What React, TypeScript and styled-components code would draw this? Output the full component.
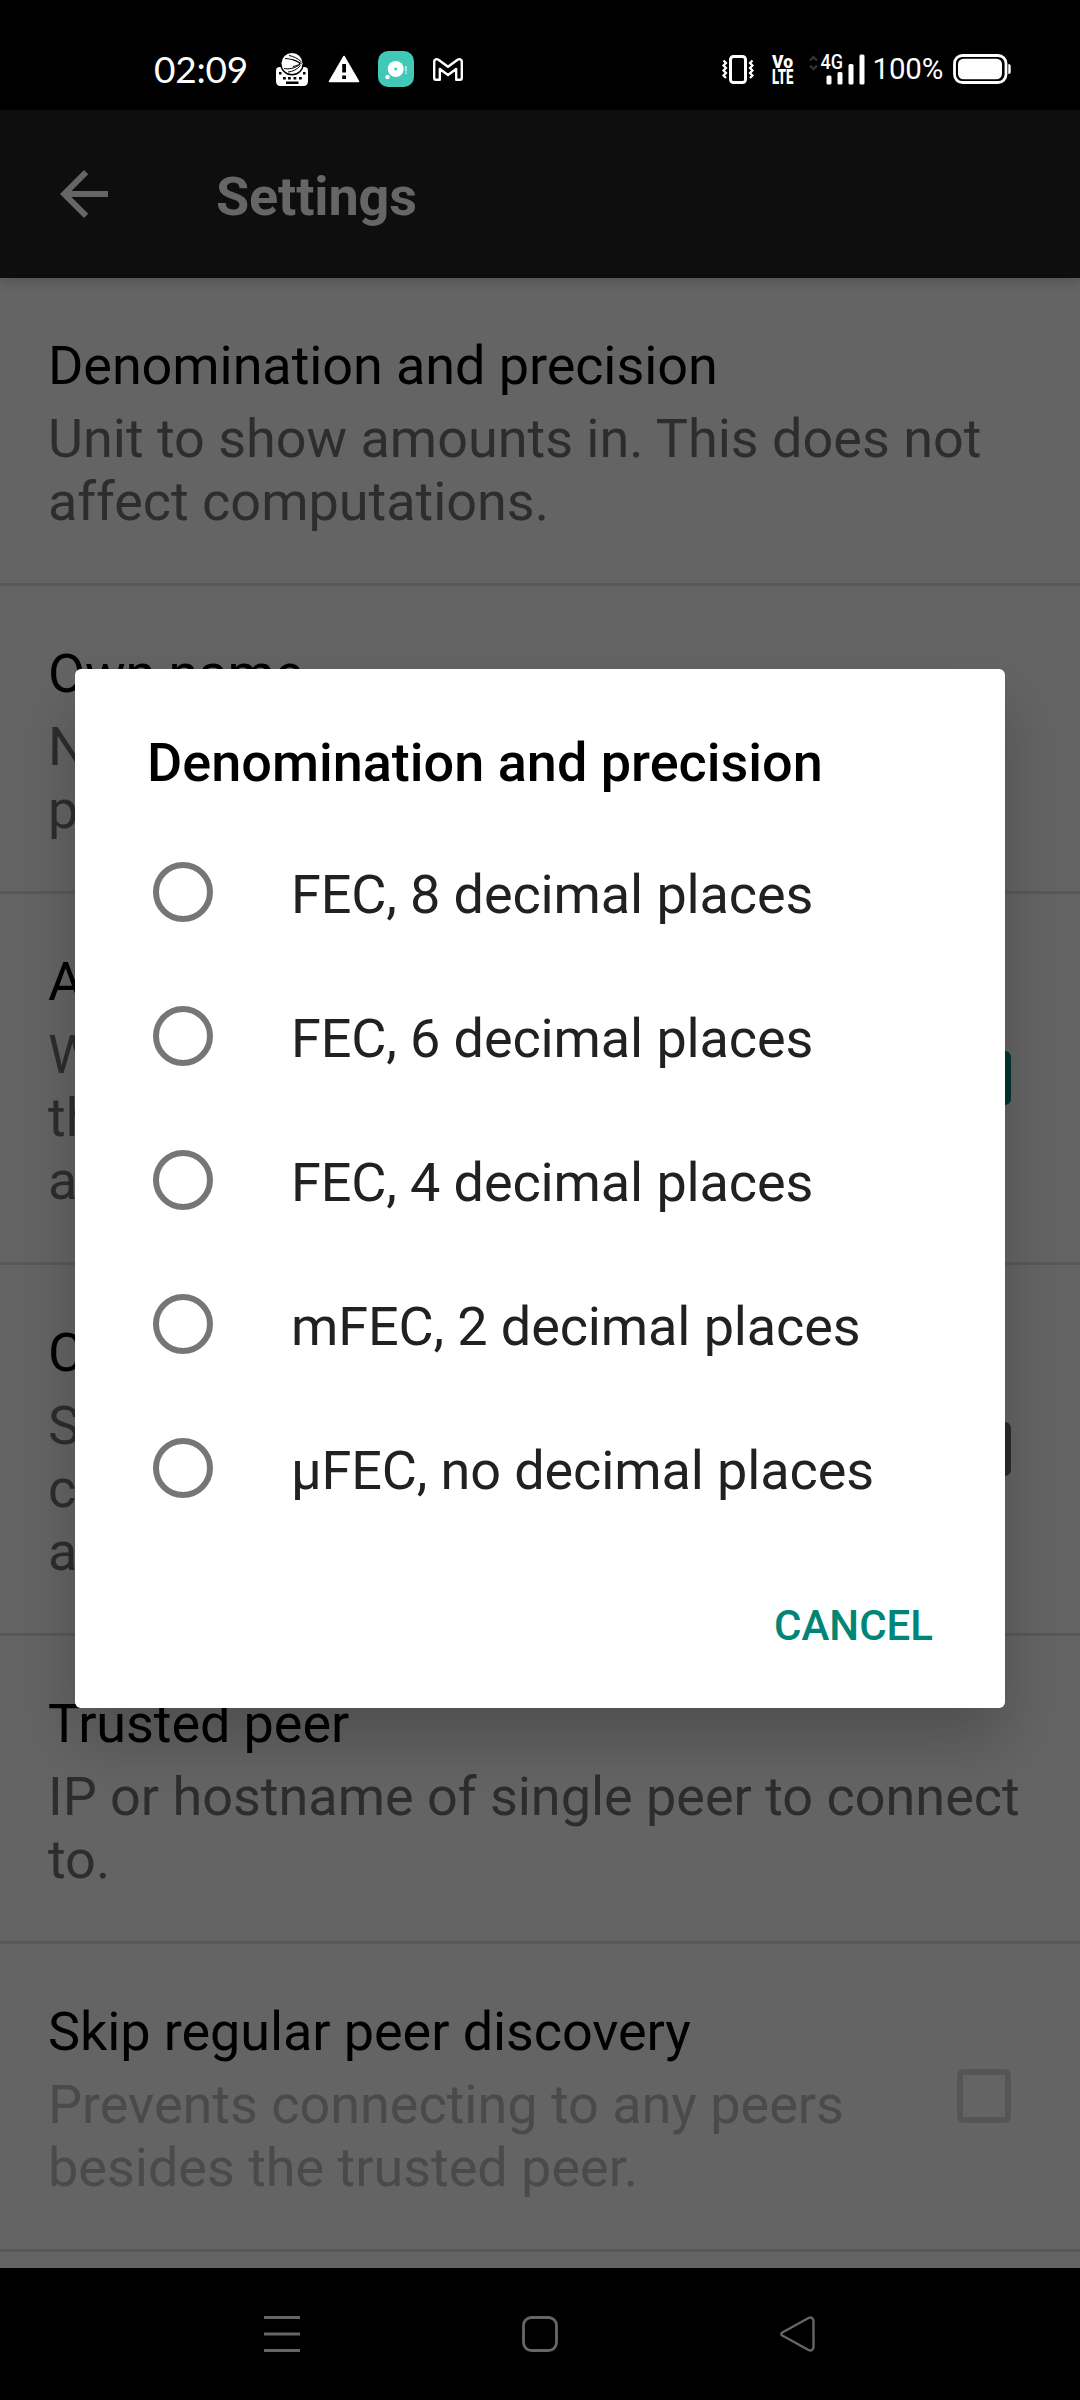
import React from "react";
import styled, { createGlobalStyle } from "styled-components";

const GlobalStyle = createGlobalStyle`
  * { box-sizing: border-box; }
  body { margin: 0; background: #000; }
`;

const Screen = styled.div`
  position: relative;
  display: flex;
  flex-direction: column;
  width: 1080px;
  height: 2400px;
  overflow: hidden;
  background: #000;
  font-family: Roboto, "Liberation Sans", sans-serif;
`;

/* ---------- status bar ---------- */

const StatusBar = styled.header`
  display: flex;
  flex: none;
  align-items: center;
  justify-content: space-between;
  height: 110px;
  padding: 28px 69px 0 154px;
  color: #fff;
`;

const StatusGroup = styled.div`
  display: flex;
  align-items: center;
`;

const Clock = styled.span`
  width: 121px;
  font-family: Lato, sans-serif;
  font-size: 37px;
  line-height: 40px;
  letter-spacing: -0.2px;
`;

const BatteryLevel = styled.span`
  width: 70px;
  margin: 0 10.5px 0 8px;
  font-size: 29.5px;
  line-height: 34px;
  letter-spacing: -0.2px;
`;

const Glyph = styled.svg<{ $gap?: number }>`
  display: block;
  flex: none;
  margin-left: ${(p) => p.$gap ?? 0}px;
  overflow: visible;
`;

const KeyboardIcon = () => (
  <Glyph width="34" height="34" viewBox="0 0 34 34">
    <path d="M5 15h24c3 0 4 1.500 4 4v10c0 3-1.500 5-5 5H6c-3.500 0-5-2-5-5V19c0-2.500 1-4 4-4z" fill="#fff" />
    <circle cx="17" cy="11.500" r="12" fill="#000" />
    <circle cx="17" cy="11.500" r="10.500" fill="#fff" />
    <path
      d="M10 6.500c5 .2 11 1.500 16.500 5M14 3.500c4.500.8 9 3 12.500 6.500M9 16.500c5 1 10.500 0 16.500-4.500M13 20c4.500-.2 9-2.500 12.500-6.500M18 8c3 .8 5 2 7 4-2 1-4 2-7 2.500"
      fill="none"
      stroke="#000"
      strokeWidth="1"
    />
    <path
      d="M4 20h2.500v2.500H4zM28 20h2.500v2.500H28zM8 25h2.800v2.500H8zM13 25h2.800v2.500H13zM18.500 25h2.800v2.500h-2.800zM24 25h2.800v2.500H24zM11 29.500h12.500V32H11z"
      fill="#000"
    />
  </Glyph>
);

const WarningIcon = () => (
  <Glyph width="32" height="28" viewBox="0 0 32 28" $gap={19}>
    <path d="M16 1.500 30.500 26.500H1.500z" fill="#fff" stroke="#fff" strokeWidth="1.500" strokeLinejoin="round" />
    <path d="M14.200 9h3.800v8.500h-3.800zM14.200 20.500h3.800v3.500h-3.800z" fill="#000" />
  </Glyph>
);

const BubbleAppIcon = () => (
  <Glyph width="36" height="36" viewBox="0 0 36 36" $gap={18}>
    <rect width="36" height="36" rx="10" fill="#40c9b7" />
    <circle cx="17.700" cy="18" r="8" fill="#fff" />
    <circle cx="17.700" cy="18" r="1.500" fill="#40c9b7" />
    <circle cx="9.500" cy="26" r="2.200" fill="#fff" />
    <path d="M27.900 15v5.500M27.900 21.500v1.500" stroke="#d5f3ef" strokeWidth="1.500" />
  </Glyph>
);

const MailIcon = () => (
  <Glyph width="30" height="23" viewBox="0 0 30 23" $gap={19}>
    <path
      d="M1.200 3.500v17c0 .8.400 1.200 1.200 1.200h4.400V11L15 17l8.200-6v10.700h4.400c.8 0 1.200-.4 1.200-1.200v-17c0-2.200-2.500-3-4.200-1.800L15 8.800 5.400 1.700C3.700.5 1.200 1.300 1.200 3.500z"
      fill="none"
      stroke="#fff"
      strokeWidth="2.400"
      strokeLinejoin="round"
    />
  </Glyph>
);

const VibrateIcon = () => (
  <Glyph width="32" height="29" viewBox="0 0 32 29">
    <rect x="8.500" y="1.500" width="15" height="26" rx="3" fill="none" stroke="#fff" strokeWidth="3" />
    <path
      d="M1.500 5.500 4 8 1.500 10.500 4 13 1.500 15.500 4 18 1.500 20.500 4 23M30.500 5.500 28 8l2.500 2.500L28 13l2.500 2.500L28 18l2.500 2.500L28 23"
      fill="none"
      stroke="#fff"
      strokeWidth="2.200"
    />
  </Glyph>
);

const VolteIcon = () => (
  <Glyph width="22" height="31" viewBox="0 0 22 31" $gap={18} fill="#fff" fontFamily="Roboto, sans-serif" fontWeight="900">
    <text x="0" y="14" fontSize="19" textLength="21" lengthAdjust="spacingAndGlyphs">Vo</text>
    <text x="0" y="30" fontSize="19.500" textLength="21.500" lengthAdjust="spacingAndGlyphs">LTE</text>
  </Glyph>
);

const SignalIcon = () => (
  <Glyph width="57" height="31" viewBox="0 0 57 31" $gap={14} fill="#fff">
    <path d="M2 6.500 5.500 3 9 6.500M2 11.500 5.500 15 9 11.500" fill="none" stroke="#333" strokeWidth="2.400" />
    <text x="12.500" y="15" fontFamily="Roboto, sans-serif" fontWeight="500" fontSize="20" textLength="22.500" lengthAdjust="spacingAndGlyphs">4G</text>
    <rect x="18.500" y="21.500" width="5" height="9" rx="1.500" />
    <rect x="29.500" y="18" width="5" height="12.500" rx="1.500" />
    <rect x="40.500" y="10" width="5" height="20.500" rx="1.500" />
    <rect x="51.500" y="0.500" width="5" height="30" rx="1.500" />
  </Glyph>
);

const BatteryIcon = () => (
  <Glyph width="58" height="30" viewBox="0 0 58 30">
    <rect x="1.500" y="1.500" width="51.500" height="27" rx="8" fill="none" stroke="#fff" strokeWidth="2.800" />
    <rect x="5" y="4.700" width="44" height="20.600" rx="5.500" fill="#fff" />
    <path d="M55.300 10c1.800 0 2.400 1 2.400 2v6c0 1-.6 2-2.400 2z" fill="#fff" />
  </Glyph>
);

/* ---------- app bar ---------- */

const AppBar = styled.div`
  position: relative;
  z-index: 1;
  display: flex;
  flex: none;
  align-items: center;
  height: 168px;
  padding-left: 48px;
  background: #0e0e0e;
  box-shadow: 0 3px 12px rgba(0, 0, 0, 0.18);
  color: #666;
`;

const AppTitle = styled.h1`
  margin: 4px 0 0 96px;
  font-size: 54px;
  font-weight: 700;
  line-height: 63px;
  letter-spacing: -0.15px;
`;

const BackIcon = () => (
  <Glyph width="72" height="72" viewBox="0 0 24 24" fill="#666">
    <path d="M20 11H7.830l5.590-5.590L12 4l-8 8 8 8 1.410-1.410L7.830 13H20v-2z" />
  </Glyph>
);

/* ---------- preference list ---------- */

const PreferenceList = styled.main`
  flex: 1;
  overflow: hidden;
  background: #646464;
`;

const Preference = styled.section`
  display: flex;
  align-items: center;
  justify-content: space-between;
  padding: 56px 69px 50px 48px;
  border-bottom: 3px solid #585858;
`;

const PreferenceText = styled.div`
  display: flex;
  flex-direction: column;
  gap: 10px;
  font-size: 54px;
  line-height: 63px;
  white-space: pre;
`;

const PreferenceTitle = styled.div`
  color: #000;
  letter-spacing: -0.09px;
`;

const Summary = styled.div<{ $disabled?: boolean }>`
  color: ${(p) => (p.$disabled ? "#4a4a4a" : "#2d2d2d")};
  letter-spacing: -0.02px;
`;

const Checkbox = styled.span<{ $state: "checked" | "unchecked" | "disabled" }>`
  flex: none;
  width: 54px;
  height: 54px;
  margin-top: -6.6px;
  border: 6px solid
    ${(p) => ({ checked: "#003630", unchecked: "#2b2b2b", disabled: "#555" })[p.$state]};
  border-radius: 6px;
  background: ${(p) => (p.$state === "checked" ? "#003630" : "transparent")};
`;

/* ---------- dialog ---------- */

const DialogLayer = styled.div`
  position: absolute;
  inset: 110px 0 133px;
  z-index: 2;
  display: flex;
  align-items: center;
  justify-content: center;
`;

const Dialog = styled.div`
  display: flex;
  flex-direction: column;
  width: 930px;
  height: 1039px;
  padding: 62px 72px 0;
  border-radius: 6px;
  background: #fff;
  box-shadow: 0 33px 62px rgba(0, 0, 0, 0.21);
`;

const DialogTitle = styled.h2`
  margin: 0 0 26px;
  color: #000;
  font-size: 54px;
  font-weight: 500;
  line-height: 63px;
  white-space: nowrap;
`;

const Option = styled.label`
  display: flex;
  flex: none;
  align-items: center;
  height: 144px;
  padding-left: 6px;
  color: #212121;
  font-size: 54px;
  line-height: 63px;
  white-space: nowrap;
`;

const Radio = styled.span`
  width: 60px;
  height: 60px;
  margin-right: 78px;
  border: 6px solid #767676;
  border-radius: 50%;
`;

const OptionLabel = styled.span`
  padding-top: 5px;
  letter-spacing: -0.12px;
`;

const Actions = styled.div`
  display: flex;
  justify-content: flex-end;
  padding-top: 61px;
`;

const TextButton = styled.button`
  padding: 0;
  border: 0;
  background: none;
  color: #008577;
  font-family: inherit;
  font-size: 42px;
  font-weight: 500;
  line-height: 50px;
`;

/* ---------- navigation bar ---------- */

const NavBar = styled.nav`
  display: flex;
  flex: none;
  align-items: center;
  justify-content: space-between;
  height: 132px;
  padding: 0 264px;
`;

const preferences: {
  title: string;
  summary: string;
  box?: "checked" | "unchecked" | "disabled";
}[] = [
  { title: "Denomination and precision", summary: "Unit to show amounts in. This does not\naffect computations." },
  { title: "Own name", summary: "Name to be added to your\npayment requests." },
  {
    title: "Auto-close send coins dialog",
    summary: "When paying a payment request,\nthe send coins dialog will close\nautomatically.",
    box: "checked",
  },
  {
    title: "Connectivity indicator",
    summary: "Show number of currently\nconnected peers in notification\narea.",
    box: "unchecked",
  },
  { title: "Trusted peer", summary: "IP or hostname of single peer to connect\nto." },
  {
    title: "Skip regular peer discovery",
    summary: "Prevents connecting to any peers\nbesides the trusted peer.",
    box: "disabled",
  },
];

const options = [
  "FEC, 8 decimal places",
  "FEC, 6 decimal places",
  "FEC, 4 decimal places",
  "mFEC, 2 decimal places",
  "µFEC, no decimal places",
];

export default function App() {
  return (
    <>
      <GlobalStyle />
      <Screen>
        <StatusBar>
          <StatusGroup>
            <Clock>02:09</Clock>
            <KeyboardIcon />
            <WarningIcon />
            <BubbleAppIcon />
            <MailIcon />
          </StatusGroup>
          <StatusGroup>
            <VibrateIcon />
            <VolteIcon />
            <SignalIcon />
            <BatteryLevel>100%</BatteryLevel>
            <BatteryIcon />
          </StatusGroup>
        </StatusBar>
        <AppBar>
          <BackIcon />
          <AppTitle>Settings</AppTitle>
        </AppBar>
        <PreferenceList>
          {preferences.map((p) => (
            <Preference key={p.title}>
              <PreferenceText>
                <PreferenceTitle>{p.title}</PreferenceTitle>
                <Summary $disabled={p.box === "disabled"}>{p.summary}</Summary>
              </PreferenceText>
              {p.box && <Checkbox $state={p.box} />}
            </Preference>
          ))}
        </PreferenceList>
        <NavBar>
          <Glyph width="36" height="36" viewBox="0 0 36 36">
            <path d="M0 1.500h36M0 18h36M0 34.500h36" stroke="#666" strokeWidth="3" />
          </Glyph>
          <Glyph width="36" height="36" viewBox="0 0 36 36">
            <rect x="1.500" y="1.500" width="33" height="33" rx="8" fill="none" stroke="#666" strokeWidth="2.800" />
          </Glyph>
          <Glyph width="36" height="36" viewBox="0 0 36 36">
            <path
              d="M2.300 16.500 28.500 2c2.500-1.200 5 0 5 3v26c0 3-2.500 4.200-5 3L2.300 19.500c-1.300-.8-1.300-2.200 0-3z"
              fill="none"
              stroke="#666"
              strokeWidth="2.400"
            />
          </Glyph>
        </NavBar>
        <DialogLayer>
          <Dialog>
            <DialogTitle>Denomination and precision</DialogTitle>
            {options.map((label) => (
              <Option key={label}>
                <Radio />
                <OptionLabel>{label}</OptionLabel>
              </Option>
            ))}
            <Actions>
              <TextButton>CANCEL</TextButton>
            </Actions>
          </Dialog>
        </DialogLayer>
      </Screen>
    </>
  );
}
